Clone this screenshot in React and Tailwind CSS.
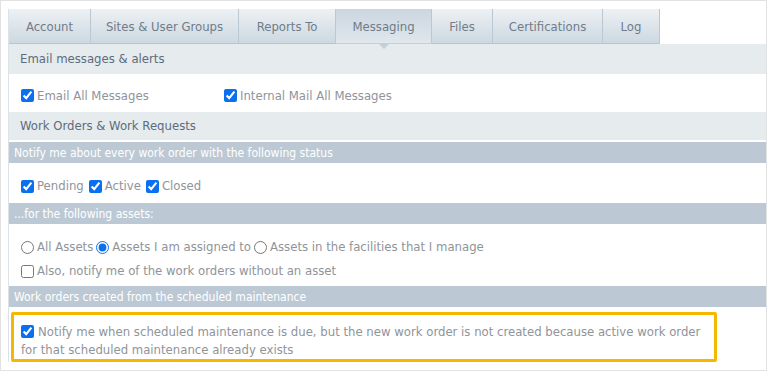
import React from 'react';

const tabs = ['Account', 'Sites & User Groups', 'Reports To', 'Messaging', 'Files', 'Certifications', 'Log'];
const tabWidths = ['w-[82px]', 'w-[148px]', 'w-[97px]', 'w-[96px]', 'w-[61px]', 'w-[110px]', 'w-[57px]'];

const Check = ({ label, checked, className = '' }) => (
  <label className={`flex items-center gap-[3px] ${className}`}>
    <input type="checkbox" defaultChecked={checked} className="m-0 w-[13px] h-[13px] accent-[#0a70f0]" />
    <span>{label}</span>
  </label>
);

const Radio = ({ label, checked }) => (
  <label className="flex items-center gap-[3px]">
    <input type="radio" name="assets" defaultChecked={checked} className="m-0 w-[13px] h-[13px] accent-[#0a70f0]" />
    <span>{label}</span>
  </label>
);

const Header = ({ children, className = '' }) => (
  <div className={`bg-[#e6ebee] text-[#5d6c7b] text-[13px] px-[11px] flex items-center ${className}`}>
    {children}
  </div>
);

const Bar = ({ children, className = '' }) => (
  <div className={`bg-[#bcc9d5] text-white text-[12px] px-[5px] flex items-center ${className}`}>
    {children}
  </div>
);

export default function App() {
  return (
    <div
      className="w-[767px] h-[371px] border border-[#e2e2e2] bg-white overflow-hidden pl-[7px] pt-[8px]"
      style={{ fontFamily: '"DejaVu Sans Condensed", "DejaVu Sans", sans-serif' }}
    >
      <div className="w-[762px] border-l border-[#dbe2e8]">
        <div className="flex h-[35px]">
          {tabs.map((t, i) => {
            const active = t === 'Messaging';
            return (
              <div
                key={t}
                className={`relative ${tabWidths[i]} flex items-center justify-center pt-[1px] text-[13px] text-[#6f7c89] border-r border-[#bac8d4] border-b ${
                  active
                    ? 'bg-gradient-to-b from-[#cbd6df] to-[#e0e7ed] border-b-[#c3cfd9]'
                    : 'bg-gradient-to-b from-[#edf1f4] to-[#cdd8e1] border-b-[#b7c5d1]'
                }`}
              >
                {t}
                {active && (
                  <span className="absolute left-[42px] top-[34px] w-0 h-0 border-l-[6px] border-r-[6px] border-t-[6px] border-l-transparent border-r-transparent border-t-[#c3cfd9]" />
                )}
              </div>
            );
          })}
        </div>
        <Header className="h-[30px]">Email messages &amp; alerts</Header>
        <div className="h-[38px] flex items-center pl-[12px] pt-[5px] text-[13px] text-[#8f949a]">
          <Check label="Email All Messages" checked className="w-[203px]" />
          <Check label="Internal Mail All Messages" checked />
        </div>
        <Header className="h-[28px]">Work Orders &amp; Work Requests</Header>
        <div className="h-[2px]" />
        <Bar className="h-[21px]">Notify me about every work order with the following status</Bar>
        <div className="h-[40px] flex items-center gap-[5px] pl-[12px] pt-[6px] text-[13px] text-[#8f949a]">
          <Check label="Pending" checked />
          <Check label="Active" checked />
          <Check label="Closed" checked />
        </div>
        <Bar className="h-[21px]">...for the following assets:</Bar>
        <div className="pl-[12px] pt-[14px] pb-[6px] text-[13px] text-[#8f949a] flex flex-col gap-[6px]">
          <div className="flex items-center gap-[3px] h-[18px]">
            <Radio label="All Assets" />
            <Radio label="Assets I am assigned to" checked />
            <Radio label="Assets in the facilities that I manage" />
          </div>
          <Check label="Also, notify me of the work orders without an asset" className="h-[18px]" />
        </div>
        <Bar className="h-[21px]">Work orders created from the scheduled maintenance</Bar>
        <div className="pl-[2px] pt-[5px]">
          <div className="w-[706px] border-[3px] border-[#f5b800] rounded-[2px] pl-[7px] pr-[4px] pt-[8px] pb-0 text-[13px] text-[#8f949a] leading-[18px]">
            <input type="checkbox" defaultChecked className="m-0 mr-[4px] w-[13px] h-[13px] align-[-2px] accent-[#0a70f0]" />
            Notify me when scheduled maintenance is due, but the new work order is not created because active work order for that scheduled maintenance already exists
          </div>
        </div>
      </div>
    </div>
  );
}
